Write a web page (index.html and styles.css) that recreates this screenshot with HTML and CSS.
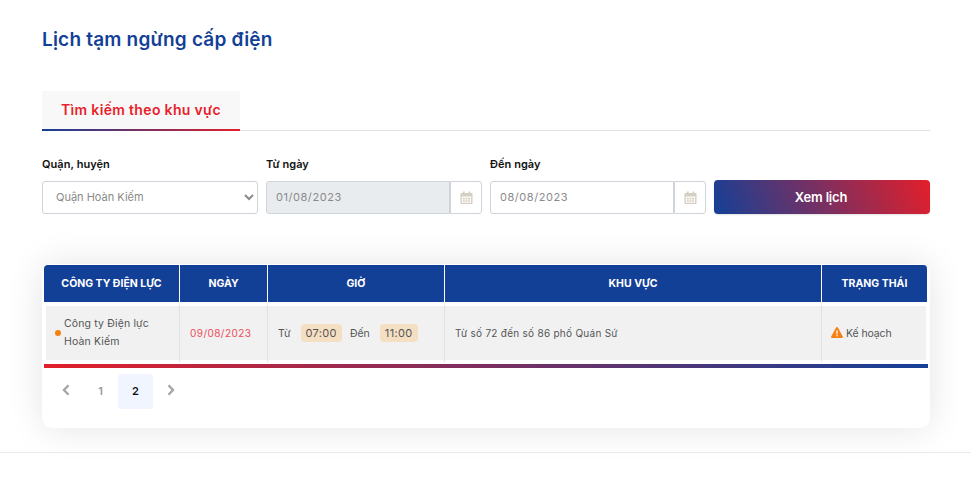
FILE: index.html
```html
<!DOCTYPE html>
<html lang="vi">
<head>
<meta charset="utf-8">
<title>Lịch tạm ngừng cấp điện</title>
<link rel="stylesheet" href="styles.css">
</head>
<body>
<main class="page">
  <h1 class="title">Lịch tạm ngừng cấp điện</h1>
  <div class="tabs"><div class="tab">Tìm kiếm theo khu vực</div></div>
  <form class="filters">
    <div class="field">
      <label class="label">Quận, huyện</label>
      <select class="select"><option>Quận Hoàn Kiếm</option></select>
    </div>
    <div class="field">
      <label class="label">Từ ngày</label>
      <div class="date">
        <input class="date-input is-disabled" value="01/08/2023" disabled>
        <span class="date-addon"><svg class="cal" viewBox="0 0 14 14"><path fill-rule="evenodd" d="M3 0h2v1.500h4V0h2v1.500h1.500A1 1 0 0 1 13.500 2.500v10a1 1 0 0 1-1 1h-11a1 1 0 0 1-1-1v-10a1 1 0 0 1 1-1H3zM2 5.500v6.500h10V5.500zM3 6.800h2.200v1.700H3zm2.900 0h2.200v1.700H5.900zm2.900 0H11v1.700H8.800zM3 9.400h2.200v1.700H3zm2.900 0h2.200v1.700H5.900zm2.900 0H11v1.700H8.800z"/></svg></span>
      </div>
    </div>
    <div class="field">
      <label class="label">Đến ngày</label>
      <div class="date">
        <input class="date-input" value="08/08/2023">
        <span class="date-addon"><svg class="cal" viewBox="0 0 14 14"><path fill-rule="evenodd" d="M3 0h2v1.500h4V0h2v1.500h1.500A1 1 0 0 1 13.500 2.500v10a1 1 0 0 1-1 1h-11a1 1 0 0 1-1-1v-10a1 1 0 0 1 1-1H3zM2 5.500v6.500h10V5.500zM3 6.800h2.200v1.700H3zm2.900 0h2.200v1.700H5.900zm2.900 0H11v1.700H8.800zM3 9.400h2.200v1.700H3zm2.900 0h2.200v1.700H5.900zm2.900 0H11v1.700H8.800z"/></svg></span>
      </div>
    </div>
    <div class="field field-action">
      <button type="button" class="btn">Xem lịch</button>
    </div>
  </form>
  <section class="card">
    <table class="table">
      <colgroup>
        <col class="c1"><col class="c2"><col class="c3"><col class="c4"><col class="c5">
      </colgroup>
      <thead>
        <tr><th>CÔNG TY ĐIỆN LỰC</th><th>NGÀY</th><th>GIỜ</th><th>KHU VỰC</th><th>TRẠNG THÁI</th></tr>
      </thead>
      <tbody>
        <tr>
          <td class="company"><span class="dot"></span><span class="company-name">Công ty Điện lực Hoàn Kiếm</span></td>
          <td class="date-cell">09/08/2023</td>
          <td class="time"><span class="time-label">Từ</span><span class="chip">07:00</span><span class="time-label">Đến</span><span class="chip">11:00</span></td>
          <td class="area">Từ số 72 đến số 86 phố Quán Sứ</td>
          <td class="status"><svg class="warn" viewBox="0 0 12 11"><path fill="#f58113" d="M6 0c.4 0 .7.2.9.5l4.900 8.900c.4.700-.1 1.500-.9 1.500H1.100c-.8 0-1.300-.8-.9-1.500L5.100.5C5.300.2 5.600 0 6 0z"/><path fill="#fff" d="M5.300 3.400h1.400l-.2 4h-1zM6 7.900a.8.8 0 1 1 0 1.600.8.8 0 0 1 0-1.600z"/></svg>Kế hoạch</td>
        </tr>
      </tbody>
    </table>
    <div class="bar"></div>
    <nav class="pager">
      <a class="page-link"><svg class="chev" viewBox="0 0 8 12"><path d="M6.500 1.200 2 6l4.500 4.800" /></svg></a>
      <a class="page-link">1</a>
      <a class="page-link is-active">2</a>
      <a class="page-link"><svg class="chev" viewBox="0 0 8 12"><path d="M1.500 1.200 6 6l-4.500 4.800" /></svg></a>
    </nav>
  </section>
</main>
<div class="footer-line"></div>
</body>
</html>
```
FILE: styles.css
```css
* { box-sizing: border-box; }
html, body { margin: 0; padding: 0; background: #fff; }
body { font-family: Inter, "Noto Sans", sans-serif; color: #333; height: 487px; overflow: hidden; }
.page { width: 888px; margin-left: 42px; padding-top: 28px; }
.title { margin: 0; font-size: 19px; line-height: 24px; font-weight: 600; letter-spacing: .2px; color: #134097; }
.tabs { margin-top: 39px; height: 40px; border-bottom: 1px solid #dfe0e5; display: flex; }
.tab { width: 198px; height: 40px; background: #f8f8f8; color: #e8212b; font-size: 14px; font-weight: 600; letter-spacing: .33px; line-height: 38px; text-align: center; border-bottom: 2px solid; border-image: linear-gradient(90deg, #134097, #e31f2a) 1; }
.filters { display: grid; grid-template-columns: repeat(4, 216px); column-gap: 8px; margin-top: 26px; }
.field { display: flex; flex-direction: column; }
.field-action { justify-content: flex-end; }
.label { font-size: 11px; font-weight: 600; letter-spacing: .05px; line-height: 14px; color: #111; margin-bottom: 10px; }
.select { height: 33px; width: 100%; border: 1px solid #ced4da; border-radius: 3px; background-color: #fff; font: 11px Inter, sans-serif; color: #8a8a8a; padding: 0 0 2px 9px; }
.date { display: flex; height: 33px; }
.date-input { flex: 1; min-width: 0; height: 33px; border: 1px solid #ced4da; border-radius: 3px 0 0 3px; padding: 0 9px 2px; font: 11px Inter, sans-serif; letter-spacing: .55px; color: #8a8a8a; background: #fff; outline: 0; }
.date-input.is-disabled { background: #e9ecef; -webkit-text-fill-color: #8a8a8a; opacity: 1; }
.date-addon { width: 32px; height: 33px; display: flex; align-items: center; justify-content: center; border: 1px solid #ced4da; border-radius: 0 3px 3px 0; background: #fff; }
.cal { width: 13px; height: 14px; fill: #d6cfc4; }
.btn { height: 34px; border: 0; border-radius: 4px; background: linear-gradient(65deg, #134097 0%, #e31f2a 100%); color: #fff; font: 600 13px/34px Inter, sans-serif; letter-spacing: -.2px; padding: 0 2px 0 0; box-shadow: 0 1px 2px rgba(0,0,0,.12); }
.card { margin-top: 50px; height: 164px; padding: 1px 2px 0; border-radius: 10px; background: #fff; box-shadow: 0 0 36px rgba(0,0,0,.11); }
.table { width: 884px; table-layout: fixed; border-collapse: separate; border-spacing: 0; }
.c1 { width: 136px; } .c2 { width: 88px; } .c3 { width: 177px; } .c4 { width: 377px; } .c5 { width: 106px; }
th { height: 37px; background: #134097; color: #fff; font-size: 10.500px; font-weight: 700; text-align: center; border-right: 1px solid #fff; padding: 0; }
th:first-child { border-top-left-radius: 4px; }
th:last-child { border-top-right-radius: 4px; }
td { height: 62px; padding: 0 10px; background: #f1f1f1; font-size: 10px; color: #555; border-top: 4px solid #fff; border-bottom: 4px solid #fff; border-right: 1px solid #e2e2e2; }
td:first-child { border-left: 2px solid #fff; }
td:last-child { border-right: 2px solid #fff; }
.company { position: relative; padding: 0 14px 0 18px; line-height: 18px; }
.dot { position: absolute; left: 9px; top: 24px; width: 6px; height: 6px; border-radius: 50%; background: #f58113; }
.company-name { display: block; letter-spacing: .15px; font-size: 10.500px; }
.date-cell { color: #ef4b5b; text-align: left; letter-spacing: .45px; padding: 0 0 0 10px; }
.time { white-space: nowrap; font-size: 10.500px; }
.time-label { margin-right: 10px; }
.chip { display: inline-block; height: 18px; line-height: 18px; padding: 0 5px; margin-right: 8px; border-radius: 4px; background: #f5dfc3; letter-spacing: .35px; font-size: 11px; }
.area { letter-spacing: .27px; }
.status { white-space: nowrap; font-size: 10.500px; padding-right: 0; letter-spacing: -.1px; }
.warn { width: 12px; height: 11px; margin-right: 3px; margin-left: -1px; vertical-align: -1px; }
.bar { height: 4px; background: linear-gradient(90deg, #e31f2a, #134097); }
.pager { display: flex; margin: 6px 0 0 4px; }
.page-link { width: 35px; height: 35px; display: flex; align-items: center; justify-content: center; padding-bottom: 1px; font-size: 11px; font-weight: 600; color: #999; border-radius: 3px; }
.page-link.is-active { background: #f0f5ff; color: #111; }
.chev { width: 8px; height: 12px; fill: none; stroke: #a6a6a6; stroke-width: 2.400; margin-top: -3px; }
.footer-line { margin-top: 24px; height: 1px; background: #eaeaea; }
```
